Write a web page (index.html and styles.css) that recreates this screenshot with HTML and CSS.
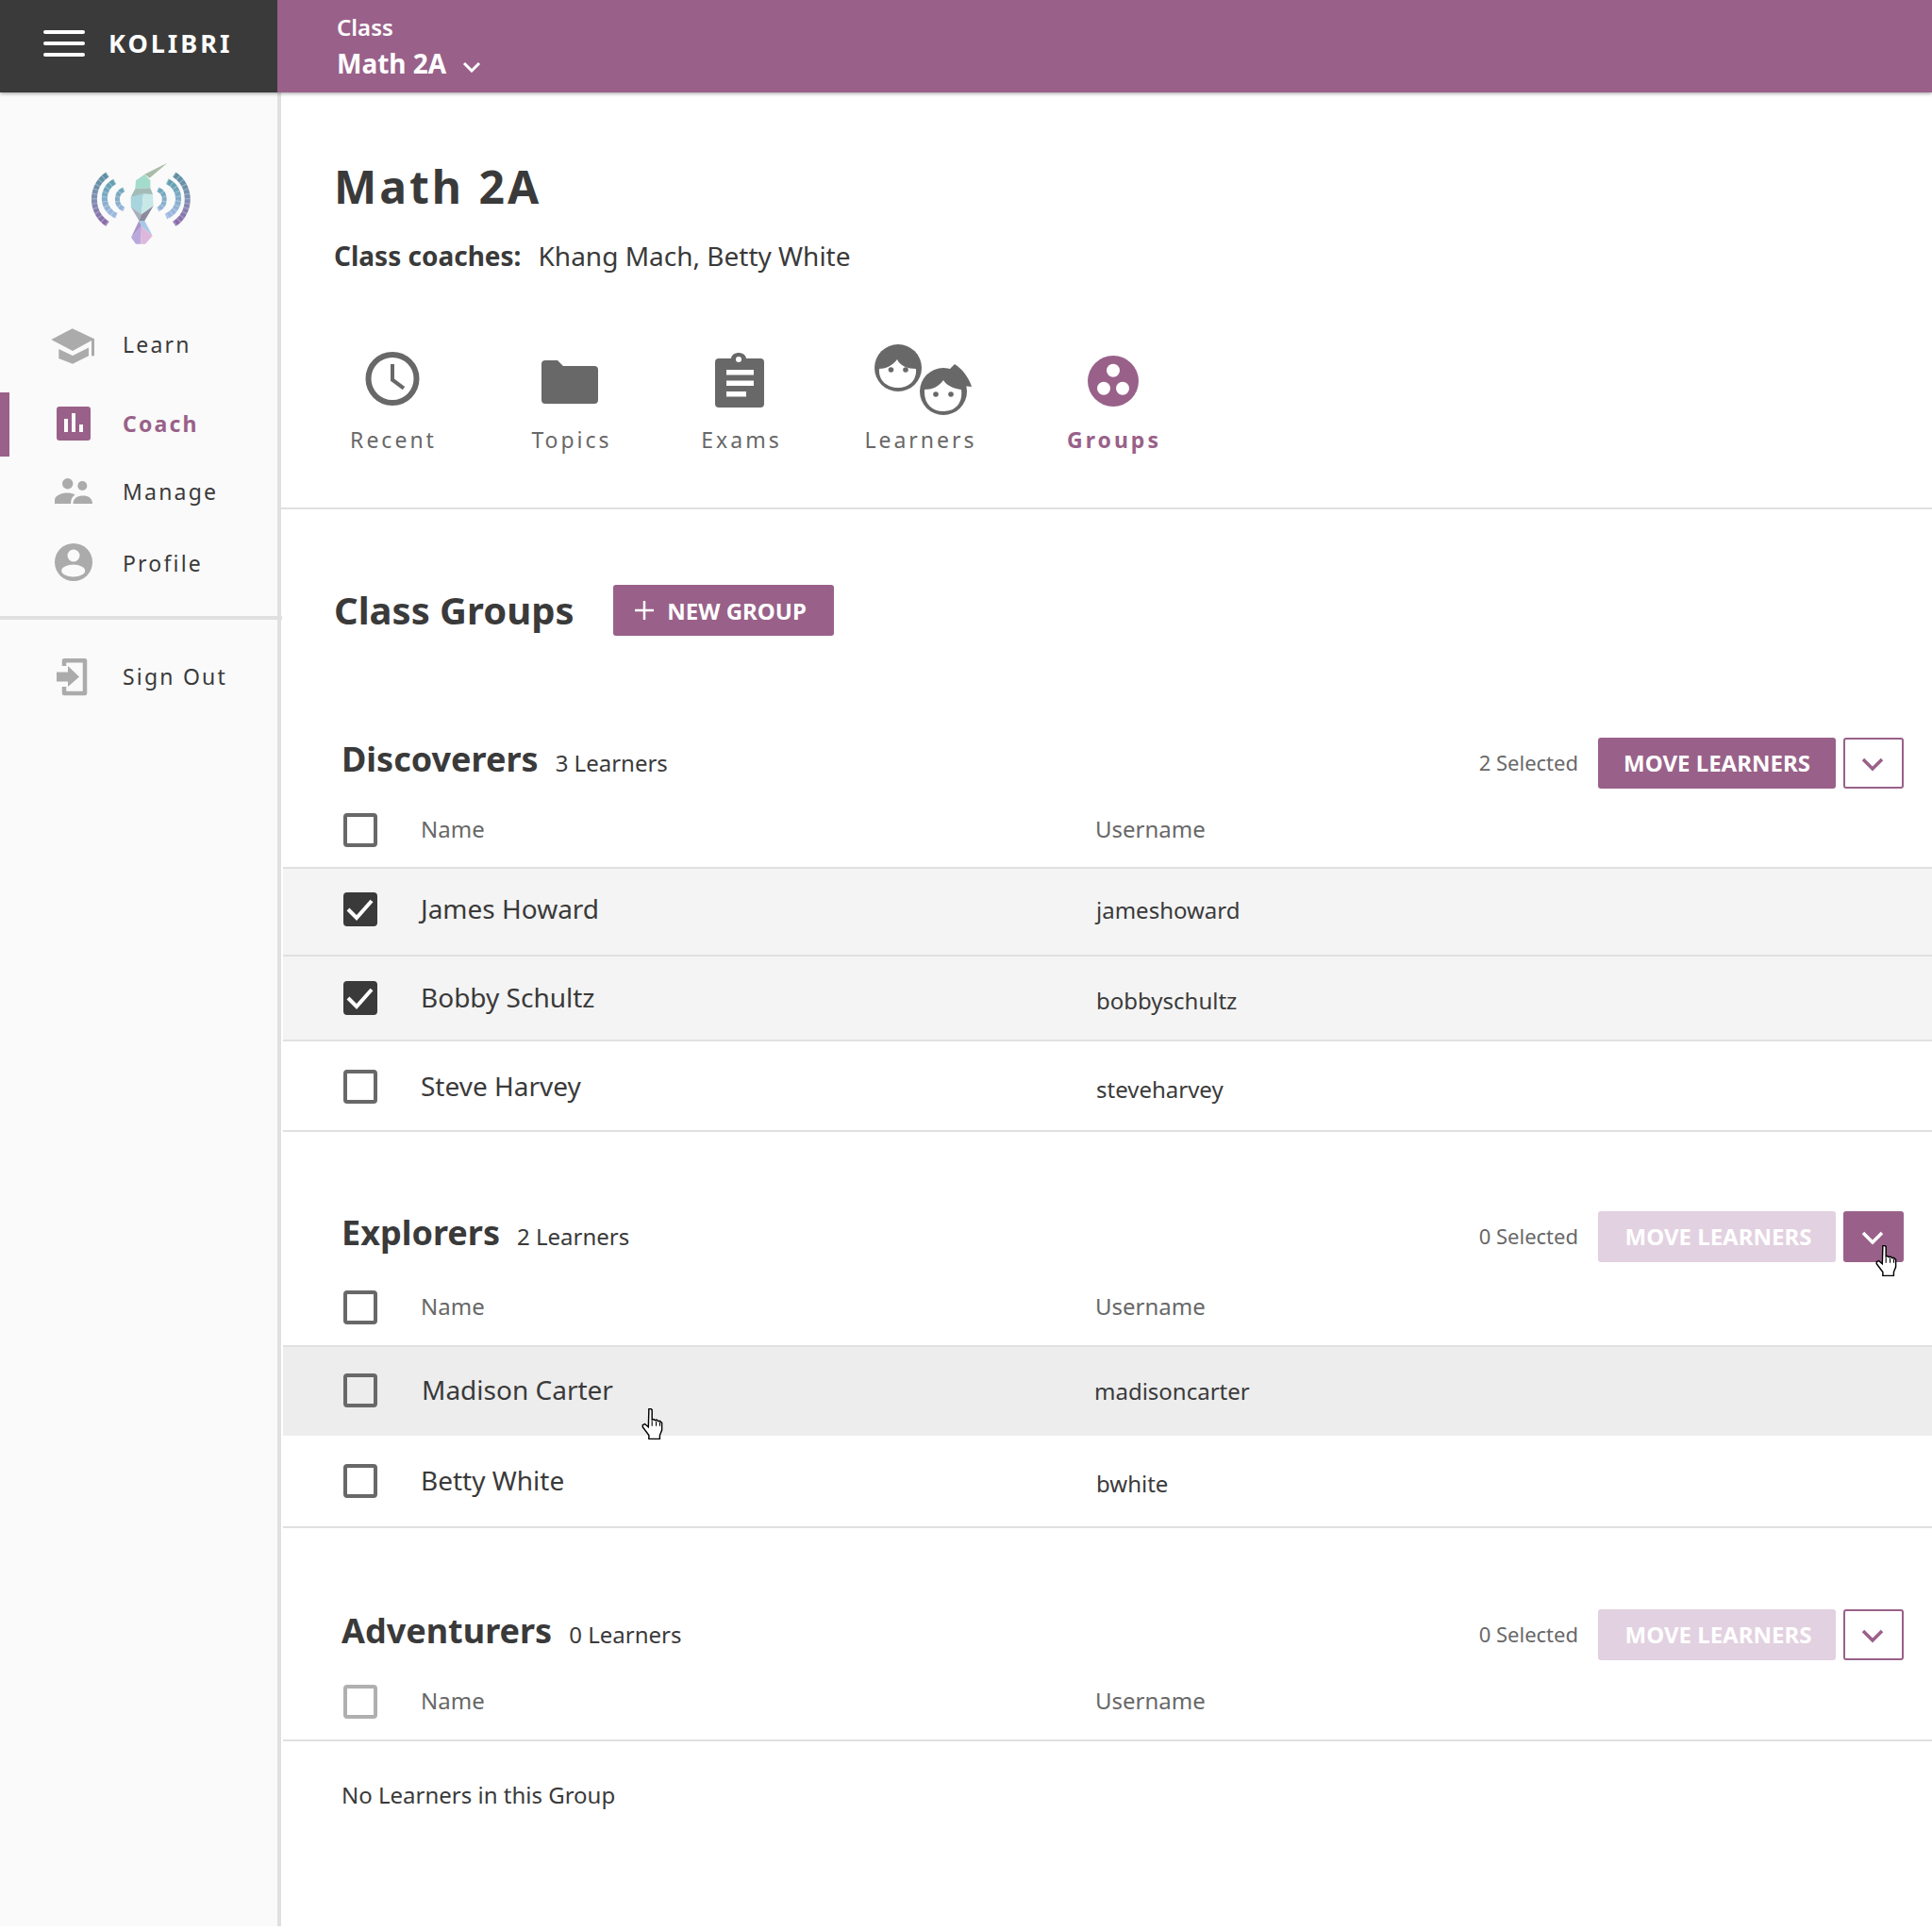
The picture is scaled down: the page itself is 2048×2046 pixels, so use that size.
FILE: index.html
```html
<!DOCTYPE html>
<html lang="en">
<head>
<meta charset="utf-8">
<title>Kolibri - Class Groups</title>
<link rel="stylesheet" href="styles.css">
</head>
<body>
<header class="topbar">
  <div class="brand">
    <span class="burger"><i></i><i></i><i></i></span>
    <span class="brand-name">KOLIBRI</span>
  </div>
  <div class="classbar">
    <div class="classbar-label">Class</div>
    <div class="classbar-name">Math 2A
      <svg class="classbar-chev" viewBox="0 0 20 12" width="20" height="12"><path d="M2 2l8 8 8-8" fill="none" stroke="#fff" stroke-width="3"/></svg>
    </div>
  </div>
</header>
<div class="shell">
  <aside class="sidebar">
    <svg class="logo" viewBox="0 0 480 390" width="160" height="130">
      <defs>
        <linearGradient id="arcg" gradientUnits="userSpaceOnUse" x1="0" y1="100" x2="0" y2="265">
          <stop offset="0" stop-color="#5a90a2"/><stop offset="0.5" stop-color="#8090b4"/><stop offset="1" stop-color="#8c68a8"/>
        </linearGradient>
        <linearGradient id="arcm" gradientUnits="userSpaceOnUse" x1="0" y1="125" x2="0" y2="240">
          <stop offset="0" stop-color="#5f9fae"/><stop offset="1" stop-color="#a4bae4"/>
        </linearGradient>
      </defs>
      <g fill="none" stroke-width="18">
        <path d="M132 105A94 94 0 0 0 132 262" stroke="url(#arcg)"/>
        <path d="M344 105A94 94 0 0 1 344 262" stroke="url(#arcg)"/>
        <path d="M155 127A60 60 0 0 0 160 236" stroke="url(#arcm)"/>
        <path d="M322 127A60 60 0 0 1 318 238" stroke="url(#arcm)"/>
        <path d="M184 152A35 35 0 0 0 184 216" stroke="url(#arcm)" stroke-width="15"/>
        <path d="M292 152A35 35 0 0 1 292 216" stroke="url(#arcm)" stroke-width="15"/>
      </g>
      <g fill="none" stroke="#fafafa" stroke-width="18" stroke-dasharray="3 12" opacity=".35">
        <path d="M132 105A94 94 0 0 0 132 262"/>
        <path d="M344 105A94 94 0 0 1 344 262"/>
        <path d="M155 127A60 60 0 0 0 160 236"/>
        <path d="M322 127A60 60 0 0 1 318 238"/>
        <path d="M184 152A35 35 0 0 0 184 216"/>
        <path d="M292 152A35 35 0 0 1 292 216"/>
      </g>
      <polygon points="250,104 322,68 266,116" fill="#a8bca8"/>
      <polygon points="222,124 250,104 268,124 268,148 220,150" fill="#a4dccc"/>
      <polygon points="220,150 268,148 276,168 206,176" fill="#a4bcb8"/>
      <polygon points="206,176 246,166 240,232 206,208" fill="#a8d4de"/>
      <polygon points="246,166 276,168 278,205 240,232" fill="#c8e8e8"/>
      <polygon points="206,208 240,232 232,252" fill="#a8b0bc"/>
      <polygon points="240,232 278,205 250,252 232,252" fill="#8a8a9c"/>
      <polygon points="232,252 250,252 275,300 240,270" fill="#a8c8e8"/>
      <polygon points="232,252 240,270 207,305" fill="#a896c8"/>
      <polygon points="207,305 240,270 238,326 222,326" fill="#baa8dc"/>
      <polygon points="240,270 275,300 252,326 238,326" fill="#deb8dc"/>
    </svg>
    <nav class="nav">
      <a class="nav-item">
        <svg class="nav-icon" viewBox="0 0 50 50"><path d="M2.3 20L24.7 8.300L48 19.300V37.300H45V21L25 32z"/><path d="M10.300 30L25 37L42 28.500V37.300L25 45.700L10.300 40z"/></svg>
        <span>Learn</span>
      </a>
      <a class="nav-item nav-item--coach">
        <svg class="nav-icon" viewBox="0 0 50 50"><rect x="8" y="6" width="36" height="36" rx="3" fill="#996189"/><path fill="#fafafa" d="M16 19h4v14h-4zM24 13h4v20h-4zM32 25h4v8h-4z"/></svg>
        <span>Coach</span>
      </a>
      <a class="nav-item nav-item--manage">
        <svg class="nav-icon" viewBox="0 0 50 50"><circle cx="19.700" cy="15.700" r="5.700"/><circle cx="35.300" cy="18" r="5"/><path d="M6 37v-4c0-5 8-7.500 13-7.500 3 0 6 .5 8.500 2-3 2-4.500 5-4.500 9.500zM25.500 37c0-6 5-8.500 10.500-8.500S46 31 46 37z"/></svg>
        <span>Manage</span>
      </a>
      <a class="nav-item nav-item--profile">
        <svg class="nav-icon" viewBox="0 0 50 50"><circle cx="26" cy="24" r="20"/><circle cx="26" cy="17" r="6.500" fill="#fafafa"/><ellipse cx="25.700" cy="33" rx="12.500" ry="6.500" fill="#fafafa"/></svg>
        <span>Profile</span>
      </a>
    </nav>
    <div class="nav-divider"></div>
    <a class="nav-item nav-item--signout">
      <svg class="nav-icon" viewBox="0 0 50 50"><path d="M16 14V8.200H38V43H16V36" fill="none" stroke="#ababab" stroke-width="4.500" stroke-linejoin="round"/><path d="M8 20.500H20V14L32 25.500 20 36V30.500H8z"/></svg>
      <span>Sign Out</span>
    </a>
  </aside>
  <main class="main">
    <h1 class="title">Math 2A</h1>
    <p class="coaches"><b>Class coaches:</b><span>Khang Mach, Betty White</span></p>
    <nav class="tabs">
      <a class="tab">
        <svg class="tab-icon" viewBox="0 0 110 80"><circle cx="55" cy="39.500" r="25.500" fill="none" stroke="#686868" stroke-width="6"/><path d="M55 24v16.700l12 9" fill="none" stroke="#686868" stroke-width="4"/></svg>
        <span>Recent</span>
      </a>
      <a class="tab">
        <svg class="tab-icon" viewBox="0 0 110 80"><path fill="#686868" d="M28 20h13l6 6h33a4 4 0 0 1 4 4v32a4 4 0 0 1-4 4H28a4 4 0 0 1-4-4V24a4 4 0 0 1 4-4z"/></svg>
        <span>Topics</span>
      </a>
      <a class="tab">
        <svg class="tab-icon" viewBox="0 0 110 80"><path fill="#686868" d="M32 18h13c1-8 15-8 16 0h15a4 4 0 0 1 4 4v44a4 4 0 0 1-4 4H32a4 4 0 0 1-4-4V22a4 4 0 0 1 4-4z"/><circle cx="53" cy="19" r="3" fill="#fff"/><path fill="#fff" d="M40 30h29v5.500H40zM40 41.500h29V47H40zM40 53h21v5.500H40z"/></svg>
        <span>Exams</span>
      </a>
      <a class="tab">
        <svg class="tab-icon tab-icon--faces" viewBox="0 0 110 80">
          <circle cx="32" cy="28" r="25" fill="#686868"/>
          <path fill="#fff" d="M12 29c6 0 14-3 19-10 3 7 12 10 20 10 1 13-8 20-19 20s-21-7-20-20z"/>
          <circle cx="24.500" cy="30" r="2.800" fill="#686868"/><circle cx="40" cy="30" r="2.800" fill="#686868"/>
          <circle cx="80" cy="53" r="27" fill="#fff"/>
          <circle cx="80" cy="53" r="25" fill="#686868"/>
          <path fill="#686868" d="M86 30l6-6c8 5 15 14 18 24l-10-1z"/>
          <path fill="#fff" d="M60 51c8 0 15-3 20-10 3 5 10 9 19 10 2 15-7 23-19 23s-21-8-20-23z"/>
          <circle cx="72" cy="56" r="2.800" fill="#686868"/><circle cx="88" cy="56" r="2.800" fill="#686868"/>
        </svg>
        <span>Learners</span>
      </a>
      <a class="tab tab--active">
        <svg class="tab-icon" viewBox="0 0 110 80"><circle cx="55" cy="42" r="27" fill="#996189"/><circle cx="55" cy="30.700" r="7" fill="#fff"/><circle cx="45" cy="49.700" r="7" fill="#fff"/><circle cx="65" cy="49.700" r="7" fill="#fff"/></svg>
        <span>Groups</span>
      </a>
    </nav>
    <div class="groups-head">
      <h2 class="groups-title">Class Groups</h2>
      <button class="btn btn--new"><svg viewBox="0 0 22 22" width="22" height="22"><path d="M11 1v20M1 11h20" stroke="#fff" stroke-width="2.500"/></svg>NEW GROUP</button>
    </div>

    <section class="group group--first">
      <div class="group-bar">
        <h3 class="group-name">Discoverers</h3>
        <span class="group-count">3 Learners</span>
        <span class="group-sel">2 Selected</span>
        <button class="btn btn--move">MOVE LEARNERS</button>
        <button class="btn btn--drop"><svg viewBox="0 0 24 16" width="24" height="16"><path d="M2 2l10 10L22 2" fill="none" stroke="#996189" stroke-width="3.500"/></svg></button>
      </div>
      <div class="row row--head row--h83"><span class="cb"></span><span class="col">Name</span><span class="col">Username</span></div>
      <div class="row row--sel row--h91"><span class="cb cb--on"><svg viewBox="0 0 36 36"><path d="M5 18l9 9 16-18" fill="none" stroke="#fff" stroke-width="4"/></svg></span><span class="name name--james">James Howard</span><span class="user">jameshoward</span></div>
      <div class="row row--sel row--h88"><span class="cb cb--on"><svg viewBox="0 0 36 36"><path d="M5 18l9 9 16-18" fill="none" stroke="#fff" stroke-width="4"/></svg></span><span class="name">Bobby Schultz</span><span class="user user--low">bobbyschultz</span></div>
      <div class="row row--h94"><span class="cb"></span><span class="name">Steve Harvey</span><span class="user user--low">steveharvey</span></div>
    </section>

    <section class="group group--second">
      <div class="group-bar">
        <h3 class="group-name">Explorers</h3>
        <span class="group-count">2 Learners</span>
        <span class="group-sel">0 Selected</span>
        <button class="btn btn--move btn--off">MOVE LEARNERS</button>
        <button class="btn btn--drop btn--drop-on"><svg viewBox="0 0 24 16" width="24" height="16"><path d="M2 2l10 10L22 2" fill="none" stroke="#fff" stroke-width="3.500"/></svg>
          <svg class="hand hand--drop" viewBox="1 1 21.500 30" width="24" height="33"><path fill="#fff" stroke="#000" stroke-width="1.300" d="M8 1.500h2l1 1V12l1.500-.5 1.500 1 1.500-.5 1.500 1.500 1.500-.5 2 2V22l-2 5v3.500H8V27L2 19v-2l2-1 3.500 3z"/><path d="M11 13v5M15 13.500V18M18.500 14.500V18" stroke="#000" stroke-width="1"/></svg>
        </button>
      </div>
      <div class="row row--head row--h89"><span class="cb"></span><span class="col">Name</span><span class="col">Username</span></div>
      <div class="row row--hover"><span class="cb"></span><span class="name name--madison">Madison Carter</span><span class="user user--madison">madisoncarter</span>
        <svg class="hand hand--row" viewBox="1 1 21.500 30" width="24" height="33"><path fill="#fff" stroke="#000" stroke-width="1.300" d="M8 1.500h2l1 1V12l1.500-.5 1.500 1 1.500-.5 1.500 1.500 1.500-.5 2 2V22l-2 5v3.500H8V27L2 19v-2l2-1 3.500 3z"/><path d="M11 13v5M15 13.500V18M18.500 14.500V18" stroke="#000" stroke-width="1"/></svg>
      </div>
      <div class="row row--h96"><span class="cb"></span><span class="name">Betty White</span><span class="user user--low">bwhite</span></div>
    </section>

    <section class="group group--third">
      <div class="group-bar">
        <h3 class="group-name">Adventurers</h3>
        <span class="group-count">0 Learners</span>
        <span class="group-sel">0 Selected</span>
        <button class="btn btn--move btn--off">MOVE LEARNERS</button>
        <button class="btn btn--drop"><svg viewBox="0 0 24 16" width="24" height="16"><path d="M2 2l10 10L22 2" fill="none" stroke="#996189" stroke-width="3.500"/></svg></button>
      </div>
      <div class="row row--head row--h85"><span class="cb cb--off"></span><span class="col">Name</span><span class="col">Username</span></div>
      <p class="empty">No Learners in this Group</p>
    </section>
  </main>
</div>
</body>
</html>
```
FILE: styles.css
```css
* { box-sizing: border-box; }
html, body { margin: 0; padding: 0; }
body {
  width: 2048px;
  height: 2046px;
  overflow: hidden;
  background: #fff;
  color: #3a3a3a;
  font-family: "Noto Sans", "Open Sans", sans-serif;
}
a { display: block; }
h1, h2, h3, p { margin: 0; }

/* top bar */
.topbar {
  position: relative;
  z-index: 2;
  display: flex;
  height: 98px;
  background: #996189;
  box-shadow: 0 1px 4px rgba(0,0,0,.4);
}
.brand {
  width: 294px;
  background: #3a3a3a;
  color: #fff;
  display: flex;
  align-items: center;
  padding: 0 0 6px 46px;
}
.burger { display: flex; flex-direction: column; gap: 8px; width: 44px; }
.burger i { display: block; height: 4px; border-radius: 2px; background: #fff; }
.brand-name { margin-left: 25px; font-size: 27px; font-weight: 700; letter-spacing: 3px; line-height: 36px; }
.classbar { padding: 12px 0 0 63px; color: #fff; font-weight: 700; }
.classbar-label { font-size: 24px; line-height: 34px; font-weight: 600; }
.classbar-name { font-size: 28px; line-height: 40px; margin-top: 1px; }
.classbar-chev { margin-left: 10px; position: relative; top: -1px; }

/* sidebar */
.shell { display: flex; height: 1944px; }
.sidebar {
  width: 298px;
  flex: none;
  background: #fafafa;
  border-right: 4px solid #e0e0e0;
  padding-top: 52px;
  font-size: 23px;
  letter-spacing: 2.200px;
}
.logo { display: block; margin: 0 0 51px 70px; }
.nav-item {
  position: relative;
  height: 68px;
  display: flex;
  align-items: center;
  padding-left: 52px;
  color: #3a3a3a;
}
.nav-icon { width: 50px; height: 50px; margin-right: 28px; fill: #ababab; flex: none; }
.nav-item--coach span, .nav-item--manage span { position: relative; top: -1px; }
.nav-item--coach { margin-top: 17px; color: #996189; font-weight: 700; }
.nav-item--coach::before {
  content: "";
  position: absolute;
  left: 0; top: 0; bottom: 0;
  width: 10px;
  background: #996189;
}
.nav-item--manage { margin-top: 4px; }
.nav-item--profile { margin-top: 7px; }
.nav-item--signout { margin-top: 26px; }
.nav-divider { margin-top: 22px; width: 299px; height: 4px; background: #e0e0e0; position: relative; }

/* main */
.main { flex: 1; min-width: 0; }
.title {
  margin: 70px 0 0 56px;
  font-size: 48px;
  line-height: 60px;
  font-weight: 700;
  letter-spacing: 3px;
}
.coaches {
  margin: 23px 0 0 56px;
  font-size: 28px;
  line-height: 40px;
  display: flex;
  gap: 18px;
}
.tabs {
  margin-top: 71px;
  padding: 0 0 57px 29px;
  border-bottom: 2px solid #e0e0e0;
  display: grid;
  grid-template-columns: 178px 200px 160px 220px 190px;
}
.tab {
  display: flex;
  flex-direction: column;
  align-items: center;
  color: #686868;
  font-size: 23px;
  letter-spacing: 3px;
  line-height: 30px;
}
.tab span { position: relative; left: 1px; }
.tab-icon { width: 110px; height: 80px; margin-bottom: 9px; display: block; overflow: visible; }
.tab--active { color: #996189; font-weight: 700; }

.groups-head { display: flex; align-items: center; margin: 80px 0 0 56px; height: 54px; }
.groups-title { font-size: 40px; font-weight: 700; line-height: 54px; }
.btn {
  border: 0;
  border-radius: 3px;
  background: #996189;
  color: #fff;
  font-family: inherit;
  font-weight: 700;
  padding: 0;
  display: flex;
  align-items: center;
  justify-content: center;
  height: 54px;
}
.btn--new { width: 234px; margin-left: 41px; font-size: 24px; gap: 13px; padding-right: 6px; }
.group { margin-left: 2px; }
.group--first { margin-top: 108px; }
.group--second { margin-top: 84px; }
.group--third { margin-top: 86px; }
.group-bar { display: flex; align-items: center; height: 54px; padding: 0 30px 0 62px; }
.group-name { font-size: 36px; font-weight: 700; line-height: 46px; height: 54px; }
.group-count { margin-left: 18px; font-size: 24px; padding-bottom: 2px; }
.group-sel { margin-left: auto; font-size: 22px; color: #686868; padding-bottom: 2px; }
.btn--move { width: 252px; margin-left: 21px; font-size: 24px; padding-bottom: 2px; }
.btn--off { background: #e2d1e0; padding-left: 3px; }
.btn--drop {
  position: relative;
  width: 64px;
  margin-left: 8px;
  background: #fff;
  border: 2px solid #996189;
  padding-right: 2px;
}
.btn--drop svg { margin-top: 3px; }
.btn--drop-on { background: #996189; }
.hand { position: absolute; display: block; }
.btn--drop .hand--drop { left: 32px; top: 34px; margin: 0; }
.hand--row { left: 380px; top: 65px; }

/* rows */
.row {
  position: relative;
  display: grid;
  grid-template-columns: 36px 671px 1fr;
  column-gap: 45px;
  align-items: center;
  padding-left: 64px;
  border-bottom: 2px solid #e0e0e0;
  font-size: 28px;
}
.row--head { font-size: 24px; color: #686868; }
.col { position: relative; top: -2px; }
.col:nth-child(2) { left: 1px; }
.name, .user { position: relative; top: -1px; left: 1px; }
.row--sel { background: #f4f4f4; }
.row--hover { background: #ededed; border-bottom: 0; height: 94px; padding-bottom: 2px; }
.row--h83 { height: 85px; padding-top: 5px; }
.row--h89 { height: 90px; padding-top: 8px; }
.row--h85 { height: 86px; padding-top: 4px; }
.row--h91 { height: 93px; padding-bottom: 5px; }
.row--h88 { height: 90px; }
.row--h94 { height: 96px; padding-top: 2px; }
.row--h96 { height: 98px; }
.cb {
  width: 36px;
  height: 36px;
  border: 4px solid #686868;
  border-radius: 4px;
  display: block;
}
.cb--off { border-color: #b0b0b0; }
.cb--on { background: #3a3a3a; border: 0; }
.cb--on svg { display: block; width: 36px; height: 36px; }
.name--james { margin-left: 0; }
.name--madison { margin-left: 1px; }
.user { font-size: 24px; padding-top: 2px; }
.user--low { padding-top: 6px; }
.user--madison { margin-left: -2px; }
.empty { margin: 42px 0 0 62px; font-size: 24px; line-height: 30px; }
```
